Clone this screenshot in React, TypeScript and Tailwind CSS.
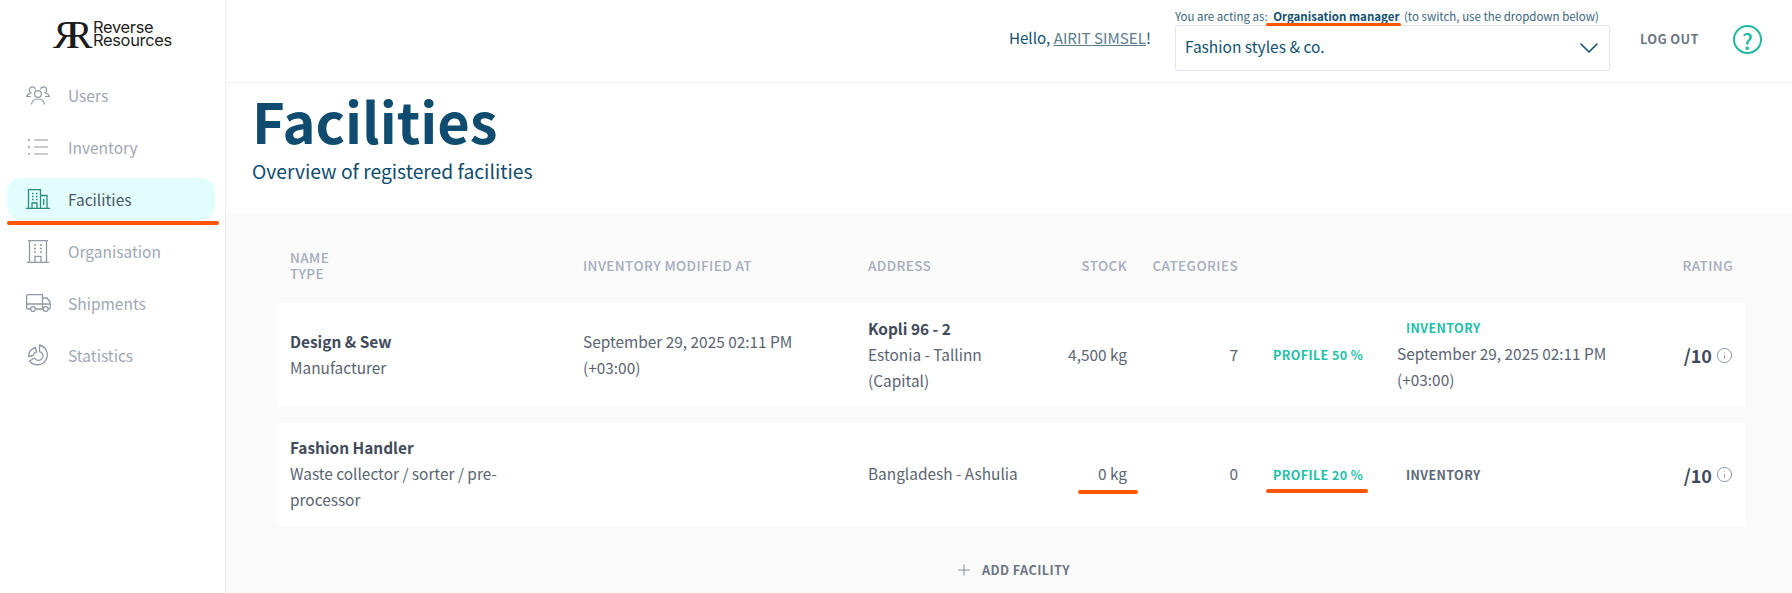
import { Plus, ChevronDown, Info } from 'lucide-react';

const sans = 'font-["Noto_Sans_CJK_SC","Noto_Sans",sans-serif]';
const rowGrid = 'grid grid-cols-[293px_285px_192px_67px_111px_159px_263px_73px] px-[13px]';

function UsersIcon() {
  return (
    <svg viewBox="0 0 24 20" className="h-[20px] w-[24px]" fill="none" stroke="currentColor" strokeWidth="1.2">
      <circle cx="12" cy="9" r="3.4" />
      <path d="M5.5 19.5c.4-4 3-5.5 6.5-5.5s6.100 1.500 6.500 5.500" />
      <path d="M9.500 4.500A3.100 3.100 0 1 0 5 7.800C3 8.500 1 9.500.6 11.500H5" />
      <path d="M14.500 4.500A3.100 3.100 0 1 1 19 7.800c2 .7 4 1.700 4.400 3.700H19" />
    </svg>
  );
}

function ListIcon() {
  return (
    <svg viewBox="0 0 20 18" className="h-[18px] w-[20px]" fill="none" stroke="currentColor" strokeWidth="1.2">
      <path d="M6 2h14M6 9h14M6 16h14" />
      <path d="M0 2h2M0 9h2M0 16h2" strokeWidth="1.6" />
    </svg>
  );
}

function FacilityIcon() {
  return (
    <svg viewBox="0 0 24 20" className="h-[20px] w-[24px]" fill="none" stroke="currentColor" strokeWidth="1.3">
      <path d="M0 19.500h24M2.500 19.500V.7h12v18.800M14.500 6.500h6.500v13M17.700 10v6" />
      <path d="M6 19.500v-5.500h5v5.500" />
      <path d="M6 4.500h1.500M10 4.500h1.500M6 7.500h1.500M10 7.500h1.500M6 10.500h1.500M10 10.500h1.500" strokeWidth="1.500" />
    </svg>
  );
}

function OrganisationIcon() {
  return (
    <svg viewBox="0 0 22 23" className="h-[23px] w-[22px]" fill="none" stroke="currentColor" strokeWidth="1.3">
      <path d="M0 22.300h22M1 .7h20M2.500 .7v21.600M19.500 .7v21.600" />
      <path d="M8 22.300v-6h6v6" />
      <path d="M7 5h2M13 5h2M7 8.500h2M13 8.500h2M7 12h2M13 12h2" strokeWidth="1.500" />
    </svg>
  );
}

function TruckIcon() {
  return (
    <svg viewBox="0 0 25 18" className="h-[18px] w-[25px]" fill="none" stroke="currentColor" strokeWidth="1.3">
      <path d="M4.500 15H2a1.400 1.400 0 0 1-1.400-1.400V2A1.400 1.400 0 0 1 2 .7h14.500V15H9.500" />
      <path d="M16.500 4h4.500l3.300 4.500v5a1.400 1.400 0 0 1-1.400 1.500H22M17.500 15h-1M.6 10h23.700" />
      <circle cx="7" cy="15" r="2.400" />
      <circle cx="19.700" cy="15" r="2.400" />
    </svg>
  );
}

function StatsIcon() {
  return (
    <svg viewBox="0 0 22 22" className="h-[22px] w-[22px]" fill="none" stroke="currentColor" strokeWidth="1.3" strokeLinejoin="round">
      <path d="M12.500 1A10 10 0 1 1 2.500 17L7.500 14A4.500 4.500 0 1 0 12.500 7.500Z" />
      <path d="M8.500 3.500A9 9 0 0 0 1.500 12.500L6 11.500A5 5 0 0 1 9.500 8Z" />
    </svg>
  );
}

const navItems = [
  { label: 'Users', icon: <UsersIcon /> },
  { label: 'Inventory', icon: <ListIcon /> },
  { label: 'Facilities', icon: <FacilityIcon />, active: true },
  { label: 'Organisation', icon: <OrganisationIcon /> },
  { label: 'Shipments', icon: <TruckIcon /> },
  { label: 'Statistics', icon: <StatsIcon /> },
];

function Logo() {
  return (
    <div className="flex h-[74px] items-start pl-[53px] pt-[20px] text-[#1c1c1c]">
      <div className="flex h-[30px] w-[37px] font-['Liberation_Serif',serif] text-[40px] leading-[30px]">
        <span className="-scale-x-100">R</span>
        <span className="-ml-[14px]">R</span>
      </div>
      <div className="ml-[3px] pt-[1px] font-['Inter',sans-serif] text-[16.400px] leading-[13px] tracking-[-0.3px]">
        <div>Reverse</div>
        <div>Resources</div>
      </div>
    </div>
  );
}

function Sidebar() {
  return (
    <aside className="w-[226px] shrink-0 border-r border-[#eef0f5] bg-white">
      <Logo />
      <nav className="flex flex-col gap-[10px] px-[7px]">
        {navItems.map((item) => (
          <div
            key={item.label}
            className={`relative flex h-[42px] w-[208px] items-center rounded-[14px] text-[15.500px] leading-[24px] ${
              item.active ? 'bg-[#e1fefd] text-[#4b5768]' : 'text-[#a0a7b4]'
            }`}
          >
            <span className={`flex w-[61px] justify-center pl-[1px] ${item.active ? 'text-[#2b8b7c]' : 'text-[#9299a5]'}`}>
              {item.icon}
            </span>
            {item.label}
            {item.active && (
              <span className="absolute left-0 top-[43px] h-[4px] w-[212px] rounded-full bg-[#ff5500]" />
            )}
          </div>
        ))}
      </nav>
    </aside>
  );
}

function Header() {
  return (
    <header className="flex h-[83px] items-start justify-end border-b border-[#eef0f5] bg-white pr-[30px]">
      <div className="mr-[24px] mt-[25px] text-[15.200px] leading-[24px] text-[#12506f]">
        Hello, <span className="text-[#5b7b8f] underline">AIRIT SIMSEL</span>!
      </div>
      <div className="relative mr-[30px] mt-[8px] w-[435px]">
        <div className="whitespace-nowrap text-[11.500px] leading-[17px] text-[#3a6680]">
          You are acting as: <b className="ml-[3px] mr-[2px] font-bold text-[#12506f]">Organisation manager</b> (to switch, use the dropdown below)
        </div>
        <span className="absolute left-[91px] top-[15px] h-[3px] w-[135px] rounded-full bg-[#ff5500]" />
        <div className="flex h-[46px] items-center justify-between rounded-[3px] border border-[#dfe3ea] pb-[2px] pl-[9px] pr-[4px] text-[15.500px] text-[#12506f]">
          Fashion styles &amp; co.
          <ChevronDown className="mt-[2px] h-[32px] w-[32px] text-[#12506f]" strokeWidth={1.2} />
        </div>
      </div>
      <div className="mr-[34px] mt-[28px] text-[12.800px] font-semibold leading-[22px] tracking-[0.4px] text-[#6d7685]">LOG OUT</div>
      <div className="mt-[25px] flex h-[29px] w-[29px] items-center justify-center rounded-full border-[2px] border-[#1fb8a1] text-[22px] font-medium leading-none text-[#1fb8a1]">
        ?
      </div>
    </header>
  );
}

function Rating() {
  return (
    <div className="flex items-center justify-end gap-[4px] pt-[3px]">
      <span className="text-[18px] font-bold leading-[26px] text-[#3f4a5a]">/10</span>
      <Info className="h-[17px] w-[17px] text-[#7a8494]" strokeWidth={1.2} />
    </div>
  );
}

export default function App() {
  return (
    <div className={`flex h-[593px] overflow-hidden bg-white ${sans}`}>
      <Sidebar />
      <main className="min-w-0 flex-1">
        <Header />
        <section className="h-[130px] pl-[26px] pt-[4px] text-[#0f4c6f]">
          <h1 className="text-[56px] font-semibold leading-[66px]">Facilities</h1>
          <p className="mt-[4px] text-[19.300px] leading-[28px]">Overview of registered facilities</p>
        </section>
        <section className="h-[380px] bg-[#fafafa] pl-[51px] pr-[46px] pt-[36px]">
          <div className={`${rowGrid} h-[54px] items-center pb-[22px] text-[13.500px] font-medium leading-[16px] tracking-[0.4px] text-[#a6adbd]`}>
            <div>
              NAME
              <br />
              TYPE
            </div>
            <div>INVENTORY MODIFIED AT</div>
            <div>ADDRESS</div>
            <div className="text-right">STOCK</div>
            <div className="text-right">CATEGORIES</div>
            <div />
            <div />
            <div className="text-right">RATING</div>
          </div>

          <div className={`${rowGrid} mb-[16px] h-[104px] items-center bg-white pb-[3px] text-[15.400px] leading-[26px] text-[#5a6472]`}>
            <div>
              <div className="font-semibold text-[#3f4a5a]">Design &amp; Sew</div>
              <div>Manufacturer</div>
            </div>
            <div>
              September 29, 2025 02:11 PM
              <br />
              (+03:00)
            </div>
            <div>
              <div className="font-semibold text-[#3f4a5a]">Kopli 96 - 2</div>
              <div>
                Estonia - Tallinn
                <br />
                (Capital)
              </div>
            </div>
            <div className="text-right">4,500 kg</div>
            <div className="text-right">7</div>
            <div className="pl-[35px] pt-[3px] text-[12.500px] font-semibold tracking-[0.4px] text-[#24bfa6]">PROFILE 50 %</div>
            <div>
              <div className="pl-[9px] text-[12.500px] font-semibold leading-[24px] tracking-[0.4px] text-[#24bfa6]">INVENTORY</div>
              <div>
                September 29, 2025 02:11 PM
                <br />
                (+03:00)
              </div>
            </div>
            <Rating />
          </div>

          <div className={`${rowGrid} h-[103px] items-center bg-white pb-[3px] text-[15.400px] leading-[26px] text-[#5a6472]`}>
            <div className="w-[230px]">
              <div className="font-semibold text-[#3f4a5a]">Fashion Handler</div>
              <div>Waste collector / sorter / pre-processor</div>
            </div>
            <div />
            <div>Bangladesh - Ashulia</div>
            <div className="relative text-right">
              0 kg
              <span className="absolute right-[-11px] top-[30px] h-[4px] w-[60px] rounded-full bg-[#ff5500]" />
            </div>
            <div className="text-right">0</div>
            <div className="relative pl-[35px] pt-[3px] text-[12.500px] font-semibold tracking-[0.4px] text-[#24bfa6]">
              PROFILE 20 %
              <span className="absolute left-[28px] top-[30px] h-[4px] w-[102px] rounded-full bg-[#ff5500]" />
            </div>
            <div className="pl-[9px] pt-[3px] text-[12.500px] font-semibold tracking-[0.4px] text-[#5d6878]">INVENTORY</div>
            <Rating />
          </div>

          <div className="mt-[33px] flex items-center justify-center gap-[9px] pl-[2px] text-[12.700px] font-semibold leading-[22px] tracking-[0.4px] text-[#6d7685]">
            <Plus className="h-[18px] w-[18px]" strokeWidth={1.1} />
            ADD FACILITY
          </div>
        </section>
      </main>
    </div>
  );
}
